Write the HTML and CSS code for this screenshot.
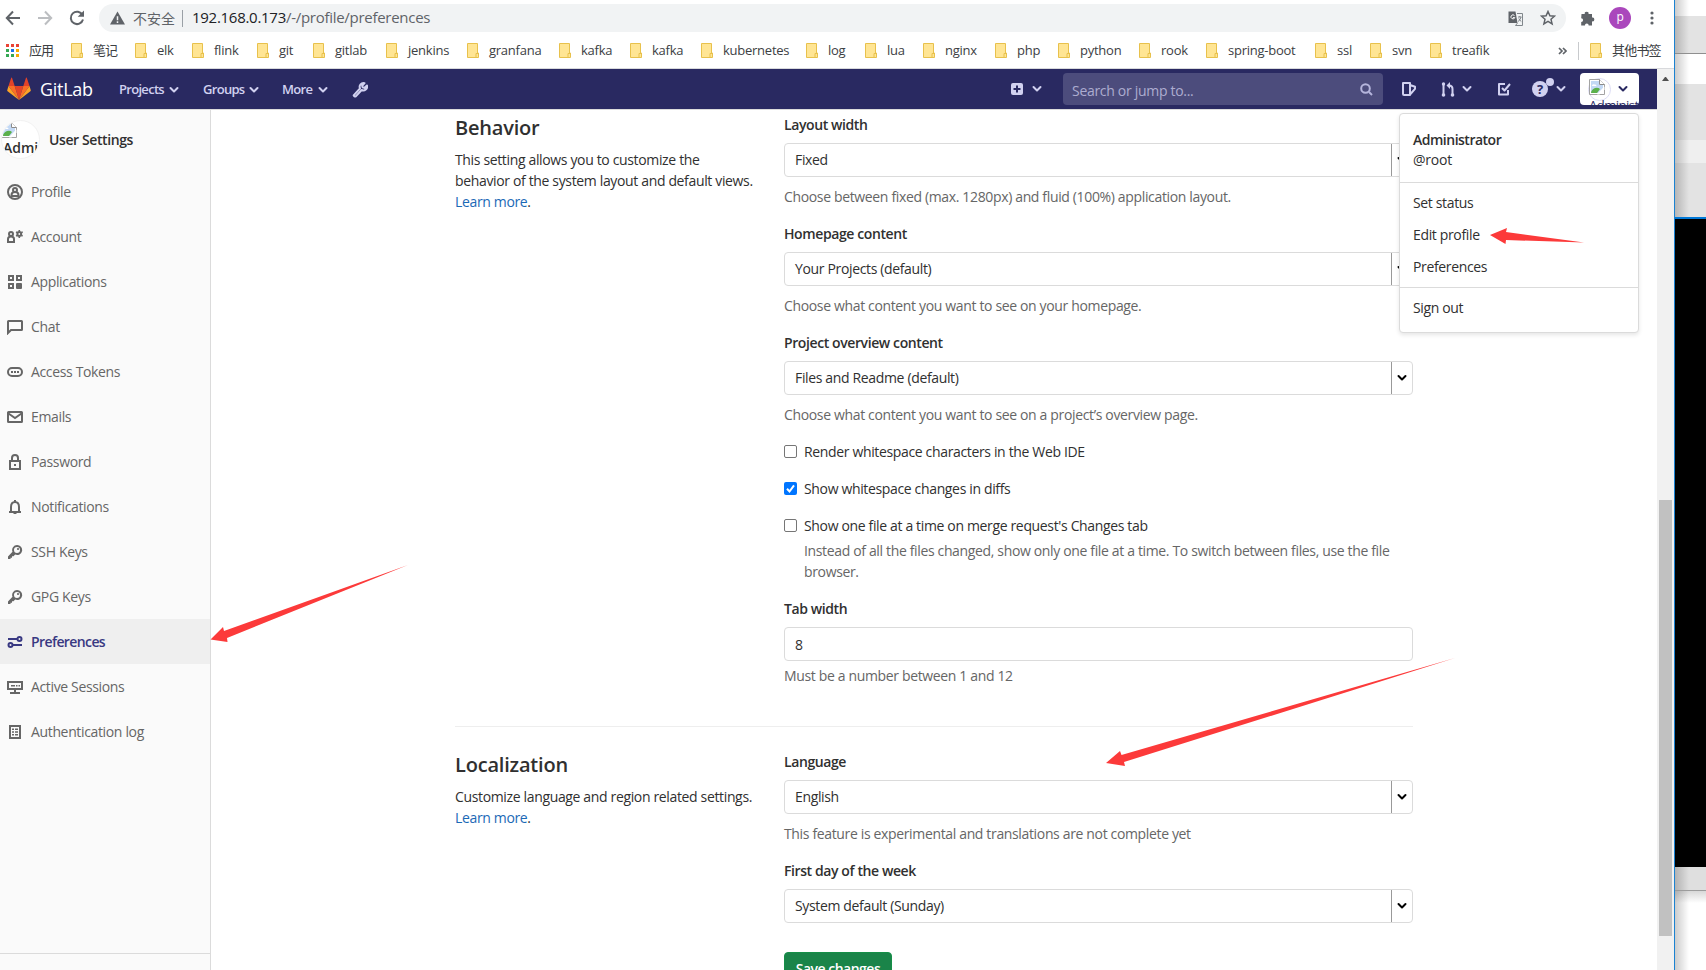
FILE: index.html
```
<!DOCTYPE html>
<html lang="en">

<head>
    <meta charset="UTF-8">
    <meta name="viewport" content="width=device-width, initial-scale=1.0">
    <title>Preferences · User Settings · GitLab</title>
    <link rel="stylesheet" href="styles.css">
</head>

<body>

    <svg class="sprite">
        <symbol id="chevron" viewBox="0 0 10 8">
            <path d="M1.5 2l3.5 3.5L8.500 2" fill="none" stroke="currentColor" stroke-width="2" stroke-linecap="round" stroke-linejoin="round" />
        </symbol>
        <symbol id="folder" viewBox="0 0 12 15">
            <path d="M.5.5h10v9.500h1v4.500H.5z" fill="#ffe594" stroke="#e8c14c" />
            <path d="M9 14.500V10.500h2" fill="none" stroke="#e8c14c" />
        </symbol>
        <symbol id="broken" viewBox="0 0 16 16">
            <path d="M.5.5h10l5 5v10H.5z" fill="#fff" stroke="#a3a3a3" />
            <path d="M2 2h8v4h4v3L9 14H2z" fill="#c3d9f5" />
            <path d="M3 6.500q1-2 2.500-1 2-.5 2 1.500H3z" fill="#fff" />
            <path d="M2 14q0-3 4-5 3-1 5 1l-3 4z" fill="#5bb04b" />
            <path d="M15.500 7.500L8 15.500h2.500l5-5z" fill="#fff" />
            <path d="M10.500.5v5h5" fill="#fff" stroke="#8b8b8b" />
        </symbol>
        <symbol id="key" viewBox="0 0 16 16">
            <path fill-rule="evenodd" d="M10 1a5 5 0 1 1-1.800 9.600L6.500 12.300H5v1.500H3.500V15H1v-2.600l4.500-4.600A5 5 0 0 1 10 1zm0 2a3 3 0 1 0 0 6 3 3 0 0 0 0-6z" />
            <circle cx="11" cy="5" r="1.100" />
        </symbol>
    </svg>

    <div class="desktop">
        <div class="browser">

            <div class="toolbar">
                <svg class="nav-btn" viewBox="0 0 16 16"><path d="M15 8H2M8 1.500L1.800 8 8 14.500" /></svg>
                <svg class="nav-btn off" viewBox="0 0 16 16"><path d="M1 8h13M8 1.500L14.200 8 8 14.500" /></svg>
                <svg class="nav-btn" viewBox="0 0 16 16"><path d="M13.500 5A6.200 6.200 0 1 0 14 9.500" /><path class="solid" d="M15 .5v6.300H8.700z" /></svg>
                <div class="omnibox">
                    <svg class="warn" viewBox="0 0 16 14"><path d="M8 0l8 14H0z" fill="#5f6368" /><path d="M8 5v4.500M8 10.500v1.800" stroke="#f1f3f4" stroke-width="1.600" /></svg>
                    <span class="unsafe">不安全</span>
                    <span class="url"><b>192.168.0.173</b>/-/profile/preferences</span>
                    <svg class="translate" viewBox="0 0 15 15">
                        <path d="M.5.5h7l2 11.500h-9z" fill="#5f6368" />
                        <path d="M9 2.500h5.500v12H7.500L9.500 12" fill="none" stroke="#80868b" />
                        <path d="M10 6h3.500M11.800 5v1M13 6q-.5 3-3 4.500M10.800 7.500q1 2 2.500 3" fill="none" stroke="#80868b" />
                        <path d="M6.500 4.600a2 2 0 1 0 .3 2H4.900" fill="none" stroke="#fff" />
                    </svg>
                    <svg class="star" viewBox="0 0 16 16"><path d="M8 1.500l1.900 4.300 4.600.4-3.500 3.100 1.100 4.600L8 11.400l-4.100 2.500L5 9.300 1.500 6.200l4.600-.4z" fill="none" stroke="#5f6368" stroke-width="1.500" /></svg>
                </div>
                <svg class="puzzle" viewBox="0 0 15 15"><path fill="#5f6368" d="M1.500 3h3.300a1.900 1.900 0 1 1 3.700 0h3.500v3.600a1.900 1.900 0 1 1 0 3.700V14.500H8.700a1.900 1.900 0 0 0-3.800 0H1.200V11a1.900 1.900 0 0 0 0-3.800z" /></svg>
                <span class="account">p</span>
                <svg class="dots" viewBox="0 0 4 14"><circle cx="2" cy="2" r="1.600" /><circle cx="2" cy="7" r="1.600" /><circle cx="2" cy="12" r="1.600" /></svg>
            </div>

            <div class="bookmarks">
                <a class="apps">
                    <svg viewBox="0 0 14 14">
                        <path fill="#ea4335" d="M0 0h3v3H0zM5 0h3v3H5zM10 0h3v3h-3z" />
                        <path fill="#34a853" d="M0 5h3v3H0zM0 10h3v3H0zM5 10h3v3H5z" />
                        <path fill="#1a73e8" d="M5 5h3v3H5z" />
                        <path fill="#f9ab00" d="M10 5h3v3h-3zM10 10h3v3h-3z" />
                    </svg>应用</a>
                <a class="cjk"><svg><use href="#folder" /></svg>笔记</a>
                <a><svg><use href="#folder" /></svg>elk</a>
                <a><svg><use href="#folder" /></svg>flink</a>
                <a><svg><use href="#folder" /></svg>git</a>
                <a><svg><use href="#folder" /></svg>gitlab</a>
                <a><svg><use href="#folder" /></svg>jenkins</a>
                <a><svg><use href="#folder" /></svg>granfana</a>
                <a><svg><use href="#folder" /></svg>kafka</a>
                <a><svg><use href="#folder" /></svg>kafka</a>
                <a><svg><use href="#folder" /></svg>kubernetes</a>
                <a><svg><use href="#folder" /></svg>log</a>
                <a><svg><use href="#folder" /></svg>lua</a>
                <a><svg><use href="#folder" /></svg>nginx</a>
                <a><svg><use href="#folder" /></svg>php</a>
                <a><svg><use href="#folder" /></svg>python</a>
                <a><svg><use href="#folder" /></svg>rook</a>
                <a><svg><use href="#folder" /></svg>spring-boot</a>
                <a><svg><use href="#folder" /></svg>ssl</a>
                <a><svg><use href="#folder" /></svg>svn</a>
                <a><svg><use href="#folder" /></svg>treafik</a>
                <svg class="more" viewBox="0 0 9 8"><path d="M1 1l3 3-3 3M5 1l3 3-3 3" /></svg>
                <a class="other"><svg><use href="#folder" /></svg>其他书签</a>
            </div>

            <div class="viewport">
                <div class="page">

                    <header class="navbar">
                        <svg class="tanuki" viewBox="0 0 25 24">
                            <path d="M12.500 24L17 9.500H8z" fill="#e24329" />
                            <path d="M12.500 24L8 9.500H1.500zM12.500 24L17 9.500h6.500z" fill="#fc6d26" />
                            <path d="M1.500 9.500L.2 13.800a1 1 0 0 0 .4 1L12.500 24zM23.500 9.500l1.300 4.300a1 1 0 0 1-.4 1L12.500 24z" fill="#fca326" />
                            <path d="M1.500 9.500H8L5.200.8q-.4-.8-.8 0zM23.500 9.500H17L19.800.8q.4-.8.8 0z" fill="#e24329" />
                        </svg>
                        <span class="brand">GitLab</span>
                        <a class="menu projects">Projects <svg><use href="#chevron" /></svg></a>
                        <a class="menu groups">Groups <svg><use href="#chevron" /></svg></a>
                        <a class="menu others">More <svg><use href="#chevron" /></svg></a>
                        <svg class="wrench" viewBox="0 0 16 16"><path d="M2.500 13.500l6-6.500a3.600 3.600 0 0 1 4.200-5L10.500 4.500l.5 1.500 1.500.5L15 4.200a3.600 3.600 0 0 1-5 4.300L4.500 14.500a1.500 1.500 0 0 1-2-1z" fill="none" stroke="currentColor" stroke-width="1.900" stroke-linejoin="round" /></svg>

                        <div class="nav-right">
                            <svg class="plus" viewBox="0 0 12 12"><rect width="12" height="12" rx="2" fill="currentColor" /><path d="M6 2.500v7M2.500 6h7" stroke="#292961" stroke-width="2" /></svg>
                            <svg class="chev"><use href="#chevron" /></svg>
                            <div class="search">
                                <span>Search or jump to...</span>
                                <svg viewBox="0 0 13 13"><circle cx="5.500" cy="5.500" r="4.300" /><path d="M9 9l3 3" /></svg>
                            </div>
                            <svg class="issues" viewBox="0 0 14 14"><path d="M1 1h7v12H2a1 1 0 0 1-1-1zM8 3l5 1.800v2L8.500 12" fill="none" stroke="currentColor" stroke-width="2" stroke-linejoin="round" /></svg>
                            <svg class="merge" viewBox="0 0 14 15"><path d="M2.500 3v11M11.500 14V7q0-3.500-3.500-3.500" fill="none" stroke="currentColor" stroke-width="2" /><circle cx="2.500" cy="2" r="1.700" fill="currentColor" /><circle cx="2.500" cy="13" r="1.800" fill="currentColor" /><circle cx="11.500" cy="13" r="1.800" fill="currentColor" /><path d="M9 0v7L5.500 3.500z" fill="currentColor" /></svg>
                            <svg class="chev"><use href="#chevron" /></svg>
                            <svg class="todo" viewBox="0 0 14 14"><path d="M8 2H2v10.500h9V8M5 6l2.500 2.500L13 2" fill="none" stroke="currentColor" stroke-width="2" stroke-linejoin="round" /></svg>
                            <div class="help"><span>?</span><i></i></div>
                            <svg class="chev"><use href="#chevron" /></svg>
                            <div class="user">
                                <div class="user-pic"><svg><use href="#broken" /></svg></div>
                                <span class="user-alt">Administrator</span>
                                <svg class="chev"><use href="#chevron" /></svg>
                            </div>
                        </div>

                        <div class="dropdown">
                            <div class="dropdown-head">
                                <b>Administrator</b>
                                <span>@root</span>
                            </div>
                            <ul>
                                <li>Set status</li>
                                <li>Edit profile</li>
                                <li>Preferences</li>
                            </ul>
                            <ul>
                                <li>Sign out</li>
                            </ul>
                        </div>
                    </header>

                    <div class="layout">
                        <aside class="sidebar">
                            <div class="context">
                                <div class="avatar"><svg><use href="#broken" /></svg><span>Admin</span></div>
                                <b>User Settings</b>
                            </div>
                            <ul class="side-list">
                                <li><svg viewBox="0 0 16 16"><g class="line"><circle cx="8" cy="8" r="7" /><circle cx="8" cy="6" r="2" /><path d="M4.500 12V11q0-3 3.500-3t3.500 3v1z" /></g></svg>Profile</li>
                                <li><svg viewBox="0 0 16 16"><g class="line"><circle cx="4" cy="5" r="2" /><path d="M1 13v-3q0-2.500 3-2.500T7 10v3z" /><circle cx="12.300" cy="5" r="1.900" /></g><path d="M11.500 1h1.600v1.500h-1.600zM11.500 7.500h1.600V9h-1.600zM8.700 3.600l.8-1.300 1.300.8-.8 1.300zM14 3l1.300-.8.8 1.300-1.300.8zM8.700 6.400l1.300-.8.8 1.300-1.300.8zM14.800 5.600l1.200.8-.8 1.300-1.200-.8z" /></svg>Account</li>
                                <li><svg viewBox="0 0 16 16"><g class="line"><rect x="2" y="2" width="4" height="4" /><rect x="10" y="2" width="4" height="4" /><rect x="2" y="10" width="4" height="4" /></g><rect x="9" y="9" width="6" height="6" rx="1" /></svg>Applications</li>
                                <li><svg viewBox="0 0 16 16"><path class="line" d="M1 14V2.500q0-.5.5-.5h13q.5 0 .5.500v8q0 .5-.5.500H4z" /></svg>Chat</li>
                                <li><svg viewBox="0 0 16 16"><rect class="line" x="1" y="4" width="14" height="8" rx="4" /><path d="M4 7h2v2H4zM7 7h2v2H7zM10 7h2v2h-2z" /></svg>Access Tokens</li>
                                <li><svg viewBox="0 0 16 16"><g class="line"><rect x="1" y="3" width="14" height="10" rx=".5" /><path d="M1.500 4.500L8 9l6.500-4.500" /></g></svg>Emails</li>
                                <li><svg viewBox="0 0 16 16"><g class="line"><rect x="3" y="7" width="10" height="8" /><path d="M5 7V4q0-3 3-3t3 3v3" /></g><rect x="7" y="10" width="2" height="2" /></svg>Password</li>
                                <li><svg viewBox="0 0 16 16"><path class="line" d="M2 13h12M4 13V8q0-5 4-5t4 5v5" /><path d="M7 1h2v2H7zM6 14h4l-1 1H7z" /></svg>Notifications</li>
                                <li><svg><use href="#key" /></svg>SSH Keys</li>
                                <li><svg><use href="#key" /></svg>GPG Keys</li>
                                <li class="active"><svg viewBox="0 0 16 16"><g class="line"><path d="M1 5h9M6 11h9" /><circle cx="12.500" cy="5" r="2" /><circle cx="3.500" cy="11" r="2" /></g></svg>Preferences</li>
                                <li><svg viewBox="0 0 16 16"><path class="line" d="M1 3h14v7H1zM8 10v3M3 14h10" /><path d="M4 6h4v1.500H4zM9 6h1.500v1.500H9zM11.500 6H13v1.500h-1.500z" /></svg>Active Sessions</li>
                                <li><svg viewBox="0 0 16 16"><rect class="line" x="3" y="2" width="10" height="12" /><path d="M5 4.500h2v1.500H5zM8 4.500h3v1.500H8zM5 7.300h2v1.500H5zM8 7.300h3v1.500H8zM5 10h2v1.500H5zM8 10h3v1.500H8z" /></svg>Authentication log</li>
                            </ul>
                            <div class="collapse"></div>
                        </aside>

                        <main class="content">
                            <section class="row behavior">
                                <div class="intro">
                                    <h4>Behavior</h4>
                                    <p>This setting allows you to customize the<br>behavior of the system layout and default views.<br><a>Learn more</a>.</p>
                                </div>
                                <div class="fields">
                                    <div class="group">
                                        <label>Layout width</label>
                                        <div class="select">Fixed<i><svg><use href="#chevron" /></svg></i></div>
                                        <p class="hint">Choose between fixed (max. 1280px) and fluid (100%) application layout.</p>
                                    </div>
                                    <div class="group">
                                        <label>Homepage content</label>
                                        <div class="select">Your Projects (default)<i><svg><use href="#chevron" /></svg></i></div>
                                        <p class="hint">Choose what content you want to see on your homepage.</p>
                                    </div>
                                    <div class="group">
                                        <label>Project overview content</label>
                                        <div class="select">Files and Readme (default)<i><svg><use href="#chevron" /></svg></i></div>
                                        <p class="hint">Choose what content you want to see on a project’s overview page.</p>
                                    </div>
                                    <div class="checks">
                                        <div class="check"><span class="box"></span>Render whitespace characters in the Web IDE</div>
                                        <div class="check"><span class="box on"><svg viewBox="0 0 13 13"><path d="M3 6.800l2.500 2.700L10 3.300" /></svg></span>Show whitespace changes in diffs</div>
                                        <div class="check"><span class="box"></span>Show one file at a time on merge request's Changes tab</div>
                                        <p class="check-hint">Instead of all the files changed, show only one file at a time. To switch between files, use the file<br>browser.</p>
                                    </div>
                                    <div class="group">
                                        <label>Tab width</label>
                                        <div class="select number">8</div>
                                        <p class="hint near">Must be a number between 1 and 12</p>
                                    </div>
                                </div>
                            </section>

                            <hr>

                            <section class="row">
                                <div class="intro">
                                    <h4>Localization</h4>
                                    <p>Customize language and region related settings.<br><a>Learn more</a>.</p>
                                </div>
                                <div class="fields">
                                    <div class="group">
                                        <label>Language</label>
                                        <div class="select">English<i><svg><use href="#chevron" /></svg></i></div>
                                        <p class="hint">This feature is experimental and translations are not complete yet</p>
                                    </div>
                                    <div class="group last">
                                        <label>First day of the week</label>
                                        <div class="select">System default (Sunday)<i><svg><use href="#chevron" /></svg></i></div>
                                    </div>
                                    <button class="save">Save changes</button>
                                </div>
                            </section>
                        </main>
                    </div>
                </div>

                <div class="scrollbar">
                    <span class="scroll-up"></span>
                    <span class="thumb"></span>
                </div>
            </div>
        </div>

        <div class="behind">
            <span class="b1"></span>
            <span class="b2"></span>
            <span class="b3"></span>
            <span class="b4"></span>
            <span class="b5"></span>
            <span class="b6"></span>
            <span class="b7"></span>
            <span class="b8"></span>
            <span class="b9"></span>
        </div>
    </div>

    <!-- red pointers over the page -->
    <svg class="arrows" viewBox="0 0 1706 970">
        <path d="M1490 235l17-7-1 4 78 10.500-78-2.500-.5 4z" />
        <path d="M210.500 639.500L223 627l1 4 184-66-181 73 .5 4z" />
        <path d="M1106 763l14-12 1.500 4 333.500-97-331 104 1 4z" />
    </svg>

</body>

</html>
```

FILE: styles.css
```
* {
    margin: 0;
    padding: 0;
    box-sizing: border-box;
}

:root {
    --nav: #292961;
    --nav-text: #d1d1f0;
    --line: #dbdbdb;
    --text: #303030;
    --muted: #666;
}

body {
    font-family: "Open Sans", "Noto Sans", "Noto Sans CJK SC", sans-serif;
    font-size: 14px;
    line-height: 21px;
    letter-spacing: -0.35px;
    color: var(--text);
    background: #fff;
    overflow: hidden;
}

ul {
    list-style: none;
}

b {
    font-weight: 600;
}

svg {
    display: block;
    flex: none;
}

.sprite {
    display: none;
}

.desktop {
    display: flex;
    width: 1706px;
    height: 970px;
    overflow: hidden;
}

.browser {
    display: flex;
    flex-direction: column;
    width: 1675px;
    height: 970px;
    border-right: 1px solid #1b82d1;
    background: #fff;
    flex: none;
}

/* toolbar */

.toolbar {
    display: flex;
    align-items: center;
    height: 36px;
    padding-left: 5px;
}

.nav-btn {
    width: 16px;
    height: 16px;
    margin-right: 16px;
    fill: none;
    stroke: #5f6368;
    stroke-width: 2;
}

.nav-btn.off {
    stroke: #bcbec1;
}

.nav-btn .solid {
    fill: #5f6368;
    stroke: none;
}

.omnibox {
    display: flex;
    align-items: center;
    width: 1467px;
    height: 28px;
    margin-left: -2px;
    padding-left: 11px;
    border-radius: 14px;
    background: #f1f3f4;
}

.warn {
    width: 15px;
    height: 14px;
}

.unsafe {
    margin-left: 8px;
    padding-right: 7px;
    border-right: 1px solid #9aa0a6;
    line-height: 17px;
    letter-spacing: 0;
    color: #5f6368;
}

.url {
    margin-left: 9px;
    padding-bottom: 2px;
    font-size: 15px;
    letter-spacing: -0.28px;
    color: #5f6368;
}

.url b {
    font-weight: 400;
    color: #202124;
}

.translate {
    width: 15px;
    height: 15px;
    margin-left: auto;
}

.star {
    width: 16px;
    height: 16px;
    margin: 0 10px 0 17px;
}

.puzzle {
    width: 15px;
    height: 15px;
    margin-left: 14px;
}

.account {
    width: 22px;
    height: 22px;
    margin-left: 14px;
    border-radius: 50%;
    background: #aa47bc;
    color: #fff;
    font-size: 12px;
    line-height: 19px;
    text-align: center;
}

.dots {
    width: 4px;
    height: 14px;
    margin-left: 19px;
    fill: #5f6368;
}

/* bookmarks */

.bookmarks {
    display: grid;
    grid-template-columns: 65px 64px 57px 65px 56px 73px 81px 92px 71px 71px 105px 59px 58px 72px 63px 81px 67px 109px 55px 60px 128px 20px 1fr;
    align-items: center;
    height: 33px;
    padding: 0 0 3px 6px;
    border-bottom: 1px solid #d8d9dc;
    font-size: 13px;
    letter-spacing: -0.25px;
    color: #3c4043;
}

.bookmarks a {
    display: flex;
    align-items: center;
    gap: 10px;
    white-space: nowrap;
}

.bookmarks a svg {
    width: 12px;
    height: 15px;
}

.bookmarks .apps,
.bookmarks .cjk {
    letter-spacing: -1px;
}

.bookmarks .apps svg {
    width: 14px;
    height: 14px;
    margin-right: -1px;
}

.bookmarks .more {
    width: 9px;
    height: 8px;
    fill: none;
    stroke: #5f6368;
    stroke-width: 1.7;
}

.bookmarks .other {
    padding-left: 11px;
    height: 18px;
    border-left: 1px solid #c8cacd;
    letter-spacing: -0.8px;
}

/* page */

.viewport {
    display: flex;
    flex: 1;
    min-height: 0;
}

.page {
    width: 1657px;
    flex: none;
}

.navbar {
    position: relative;
    display: flex;
    align-items: center;
    height: 41px;
    padding-left: 7px;
    border-bottom: 1px solid var(--line);
    background: var(--nav);
    color: var(--nav-text);
}

.tanuki {
    width: 24px;
    height: 23px;
    margin-top: -2px;
}

.brand {
    width: 79px;
    margin-left: 9px;
    font-size: 18px;
    letter-spacing: -0.3px;
    color: #fff;
}

.menu {
    display: flex;
    align-items: center;
    justify-content: space-between;
    padding-top: 1px;
    font-size: 13px;
    font-weight: 600;
    letter-spacing: -0.7px;
}

.menu svg,
.chev {
    width: 10px;
    height: 8px;
}

.projects {
    width: 60px;
    margin-right: 24px;
}

.groups {
    width: 56px;
    margin-right: 23px;
}

.others {
    width: 46px;
}

.wrench {
    width: 17px;
    height: 17px;
    margin-left: 23px;
}

.nav-right {
    display: flex;
    align-items: center;
    height: 40px;
    margin-left: auto;
    padding-right: 18px;
}

.plus {
    width: 12px;
    height: 12px;
    margin-right: 9px;
}

.search {
    display: flex;
    align-items: center;
    justify-content: space-between;
    width: 320px;
    height: 32px;
    margin: 0 19px 0 21px;
    padding: 2px 10px 0 9px;
    border-radius: 4px;
    background: #4c4c7c;
    color: #acacd0;
    letter-spacing: -0.3px;
}

.search svg {
    width: 13px;
    height: 13px;
    margin-top: -2px;
    fill: none;
    stroke: #b5b5dc;
    stroke-width: 2;
}

.issues {
    width: 14px;
    height: 14px;
    margin-right: 25px;
}

.merge {
    width: 14px;
    height: 15px;
    margin-right: 7px;
}

.todo {
    width: 14px;
    height: 14px;
    margin: 0 21px 0 25px;
}

.help {
    position: relative;
    width: 16px;
    height: 16px;
    margin-right: 8px;
    border-radius: 50%;
    background: var(--nav-text);
}

.help span {
    display: block;
    font-size: 13px;
    font-weight: 700;
    line-height: 17px;
    text-align: center;
    color: var(--nav);
}

.help i {
    position: absolute;
    top: -3px;
    left: 14px;
    width: 8px;
    height: 8px;
    border-radius: 50%;
    background: var(--nav-text);
}

.user {
    position: relative;
    display: flex;
    align-items: center;
    width: 59px;
    height: 32px;
    margin-left: 14px;
    padding: 0 11px 0 8px;
    border-radius: 4px;
    background: #fff;
    color: var(--nav);
    overflow: hidden;
}

.user-pic {
    width: 23px;
    height: 23px;
    border: 1px solid #dcdcf4;
    border-radius: 50%;
}

.user-pic svg {
    width: 16px;
    height: 16px;
}

/* alt text is cut off by the button edge */
.user-alt {
    position: absolute;
    top: 22px;
    left: 9px;
    font-size: 13px;
    letter-spacing: -0.5px;
    white-space: nowrap;
}

.user .chev {
    margin-left: auto;
}

.dropdown {
    position: absolute;
    top: 44px;
    right: 18px;
    z-index: 2;
    width: 240px;
    height: 220px;
    border: 1px solid var(--line);
    border-radius: 4px;
    background: #fff;
    box-shadow: 0 2px 4px rgba(0, 0, 0, 0.1);
    color: var(--text);
}

.dropdown-head {
    display: flex;
    flex-direction: column;
    height: 68px;
    padding: 16px 13px 0;
    line-height: 20px;
    letter-spacing: -0.2px;
}

.dropdown-head b {
    letter-spacing: -0.5px;
}

.dropdown ul {
    padding: 5px 13px 0;
    border-top: 1px solid var(--line);
    letter-spacing: -0.35px;
}

.dropdown ul:nth-child(2) {
    height: 105px;
}

.dropdown li {
    height: 32px;
    line-height: 30px;
}

.layout {
    display: flex;
    height: 860px;
}

.sidebar {
    display: flex;
    flex-direction: column;
    width: 211px;
    border-right: 1px solid var(--line);
    background: #fafafa;
}

.context {
    display: flex;
    align-items: center;
    height: 59px;
    padding-left: 1px;
}

.context b {
    margin-left: 9px;
    letter-spacing: -0.4px;
}

.avatar {
    width: 39px;
    height: 39px;
    padding: 1px 0 1px 1px;
    border: 1px solid #f2f2f2;
    border-radius: 50%;
    background: #fff;
    overflow: hidden;
}

.avatar svg {
    width: 16px;
    height: 16px;
    margin-left: -2px;
}

.avatar span {
    display: block;
    font-weight: 600;
    line-height: 20px;
    letter-spacing: 0;
}

.side-list li {
    display: flex;
    align-items: center;
    height: 45px;
    padding-left: 7px;
    gap: 8px;
    color: var(--muted);
    letter-spacing: -0.35px;
}

.side-list svg {
    width: 16px;
    height: 16px;
    fill: currentColor;
}

.side-list .line {
    fill: none;
    stroke: currentColor;
    stroke-width: 2;
}

.side-list .active {
    background: #efefef;
    color: #393982;
    font-weight: 600;
    letter-spacing: -0.6px;
}

.collapse {
    height: 17px;
    margin-top: auto;
    border-top: 1px solid var(--line);
}

.content {
    width: 958px;
    margin-left: 244px;
    padding-top: 5px;
}

.row {
    display: grid;
    grid-template-columns: 329px 629px;
}

.behavior {
    height: 611px;
}

.intro h4 {
    margin: 1px 0 9px;
    font-size: 20px;
    font-weight: 600;
    line-height: 24px;
    letter-spacing: -0.2px;
}

.intro a {
    color: #1b69b6;
}

.group {
    display: flex;
    flex-direction: column;
    height: 109px;
}

.group.last {
    height: 91px;
}

.group label {
    height: 28px;
    font-weight: 600;
    line-height: 20px;
    letter-spacing: -0.4px;
}

.select {
    display: flex;
    align-items: center;
    justify-content: space-between;
    height: 34px;
    padding: 0 0 1px 10px;
    border: 1px solid var(--line);
    border-radius: 4px;
    background: #fff;
}

.select i {
    display: flex;
    align-items: center;
    justify-content: center;
    width: 21px;
    height: 32px;
    margin-bottom: -1px;
    border-left: 1px solid #999;
    color: #000;
}

.select i svg {
    width: 10px;
    height: 8px;
}

.number {
    padding: 1px 0 0 10px;
}

.hint {
    margin-top: 9px;
    color: var(--muted);
}

.hint.near {
    margin-top: 4px;
}

.checks {
    height: 157px;
    margin-top: -9px;
}

.check {
    display: flex;
    align-items: center;
    height: 37px;
    gap: 7px;
}

.box {
    width: 13px;
    height: 13px;
    border: 1px solid #767676;
    border-radius: 2px;
}

.box.on {
    border: 0;
    background: #0075ff;
}

.box svg {
    fill: none;
    stroke: #fff;
    stroke-width: 2;
}

.check-hint {
    margin: -4px 0 0 20px;
    color: var(--muted);
    white-space: nowrap;
}

.checks + .group {
    margin-top: 9px;
}

hr {
    height: 1px;
    margin-bottom: 25px;
    border: 0;
    background: #eee;
}

.save {
    width: 108px;
    height: 34px;
    border: 1px solid #168f48;
    border-radius: 4px;
    background: #1a8449;
    color: #fff;
    font: inherit;
    font-weight: 600;
    line-height: 30px;
    letter-spacing: -0.5px;
}

.scrollbar {
    display: flex;
    flex-direction: column;
    width: 17px;
    background: #f1f1f1;
}

.scroll-up {
    margin: 8px 0 0 5px;
    border: 3.5px solid transparent;
    border-top: 0;
    border-bottom: 4px solid #505050;
    width: 7px;
    height: 4px;
}

.thumb {
    width: 13px;
    height: 436px;
    margin: 419px 0 0 2px;
    background: #c1c1c1;
}

/* windows behind the browser */

.behind {
    display: flex;
    flex-direction: column;
    width: 31px;
}

.behind span {
    display: block;
    background: linear-gradient(90deg, rgba(0, 0, 0, 0.2), rgba(0, 0, 0, 0) 14px), var(--c);
}

.b1 {
    --c: #fff;
    height: 16px;
}

.b2 {
    --c: #e3e3e3;
    height: 38px;
    border-bottom: 1px solid #8f8f8f;
}

.b3 {
    --c: #fff;
    height: 30px;
}

.b4 {
    --c: #e3e3e3;
    height: 56px;
}

.b5 {
    --c: #efefef;
    height: 23px;
}

.b6 {
    --c: #e3e3e3;
    height: 56px;
    border-bottom: 2px solid #0078d7;
}

.b7 {
    --c: #000;
    height: 648px;
}

.b8 {
    --c: #dfdfdf;
    height: 24px;
    border-bottom: 1px solid #9c9c9c;
}

.b9 {
    --c: linear-gradient(#d8d8d8, #fff 12px);
    height: 79px;
}

.arrows {
    position: absolute;
    top: 0;
    left: 0;
    z-index: 3;
    width: 1706px;
    height: 970px;
    fill: #fc3a3a;
    pointer-events: none;
}
```
